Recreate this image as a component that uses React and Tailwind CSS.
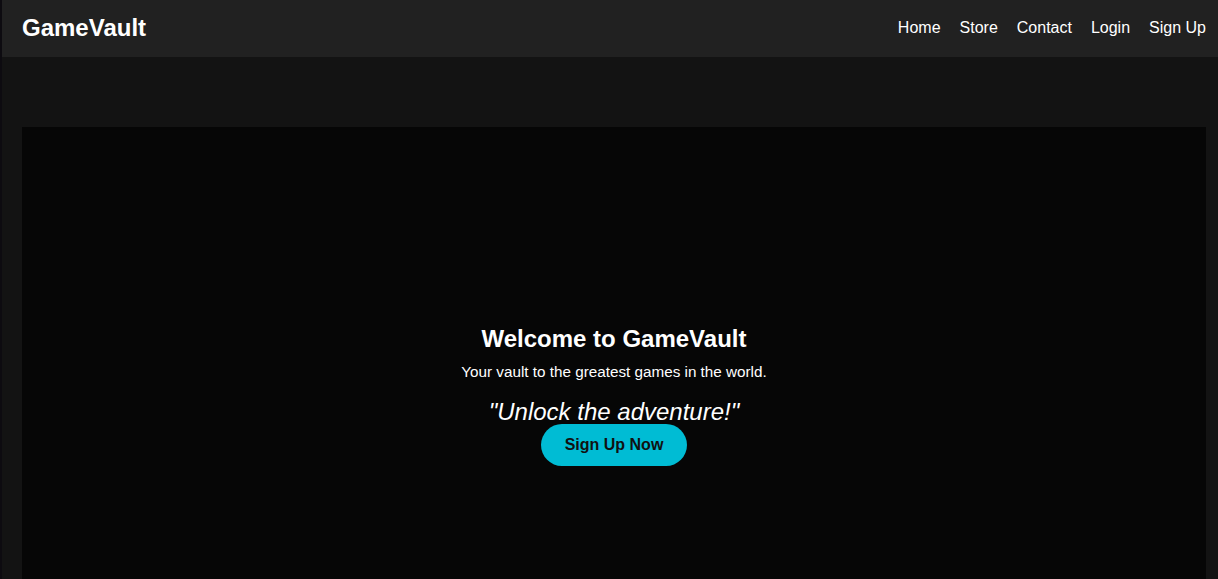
import React from "react";

const links = ["Home", "Store", "Contact", "Login", "Sign Up"];

const App = () => {
  return (
    <div
      className="min-h-screen bg-[#131313] text-white border-l-2 border-[#0d0b10]"
      style={{ fontFamily: '"Liberation Sans", Arial, sans-serif' }}
    >
      <header className="h-[57px] bg-[#212121] flex items-center justify-between pl-[20px] pr-[12px] pb-[2px]">
        <h1 className="text-[24px] font-bold leading-none">GameVault</h1>
        <nav className="flex items-center gap-[19px] text-[16px] font-light">
          {links.map((link) => (
            <a key={link} href="#" className="text-white">
              {link}
            </a>
          ))}
        </nav>
      </header>

      <main className="pt-[70px] pl-[20px] pr-[12px]">
        <section className="bg-[#060606] h-[546px] pt-[198px] flex flex-col items-center">
          <h2 className="text-[24px] leading-[28px] font-bold">Welcome to GameVault</h2>
          <p className="mt-[10px] text-[15.25px] leading-[18px]">
            Your vault to the greatest games in the world.
          </p>
          <p className="mt-[19px] text-[24px] leading-[24px] italic">
            "Unlock the adventure!"
          </p>
          <button className="h-[42px] px-6 rounded-full bg-[#00bcd4] text-[#111] text-[16px] font-bold">
            Sign Up Now
          </button>
        </section>
      </main>
    </div>
  );
};

export default App;
